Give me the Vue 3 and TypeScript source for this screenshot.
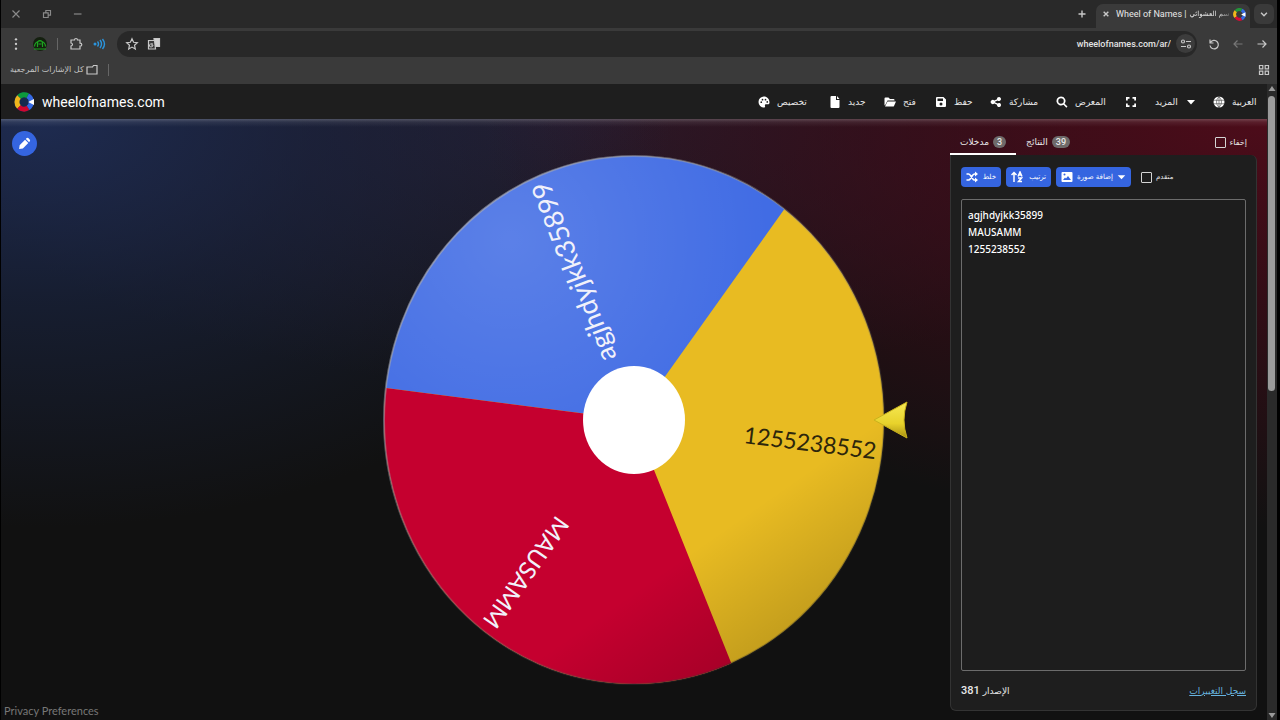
<script setup lang="ts">
import { ref } from 'vue'

interface NavItem {
  icon: string
  label: string
  title: string
  iconLast?: boolean
}

const navItems: NavItem[] = [
  { icon: 'palette', label: 'تخصيص', title: 'تخصيص' },
  { icon: 'file', label: 'جديد', title: 'جديد' },
  { icon: 'folder', label: 'فتح', title: 'فتح' },
  { icon: 'save', label: 'حفظ', title: 'حفظ' },
  { icon: 'share', label: 'مشاركة', title: 'مشاركة' },
  { icon: 'search', label: 'المعرض', title: 'المعرض' },
  { icon: 'full', label: '', title: 'ملء الشاشة' },
  { icon: 'caret', label: 'المزيد', title: 'المزيد', iconLast: true },
  { icon: 'globe', label: 'العربية', title: 'العربية' },
]

const icons: Record<string, string> = {
  palette:
    'M12 1a11 11 0 0 0 0 22c2 0 2.600-1.300 2-2.700-.8-2 .3-3.600 2.300-3.600H20c2 0 3-1.500 3-3.700C23 6 18 1 12 1zM6.500 14a1.700 1.700 0 1 1 0-3.400 1.700 1.700 0 0 1 0 3.400zm2.500-5a1.700 1.700 0 1 1 0-3.400 1.700 1.700 0 0 1 0 3.400zm6 0a1.700 1.700 0 1 1 0-3.400 1.700 1.700 0 0 1 0 3.400zm3.500 4.500a1.700 1.700 0 1 1 0-3.400 1.700 1.700 0 0 1 0 3.400z',
  file: 'M5 0h9v8h7v14q0 2-2 2H5q-2 0-2-2V2q0-2 2-2zm11 0 5 6h-5z',
  folder: 'M1 5q0-2 2-2h6l3 3h7q2 0 2 2v1H7l-4 8-2 2zm6 6h17l-4 9q-.5 1-2 1H2z',
  save: 'M4 2h13l5 5v13q0 2-2 2H4q-2 0-2-2V4q0-2 2-2zm1 3v5h11V5zm7 8a3 3 0 1 0 0 6 3 3 0 0 0 0-6z',
  share:
    'M18 2a4 4 0 1 1-2.800 6.900L9.900 11.400v1.200l5.300 2.500A4 4 0 1 1 14 17.500l-5.300-2.400a4.300 4.300 0 1 1 0-6.200L14 6.500A4 4 0 0 1 18 2z',
  search:
    'M10 1a9 9 0 0 1 7.200 14.400L23 21l-2.300 2.300-5.700-5.800A9 9 0 1 1 10 1zm0 3.500a5.500 5.500 0 1 0 0 11 5.500 5.500 0 0 0 0-11z',
  full: 'M2 2h7v3.500H5.500V9H2zm13 0h7v7h-3.500V5.500H15zM2 15h3.500v3.500H9V22H2zm16.500 0H22v7h-7v-3.500h3.500z',
  caret: 'M4 8h16l-8 9z',
}

const entries = ref('agjhdyjkk35899\nMAUSAMM\n1255238552')
const hidden = ref(false)
const advanced = ref(false)
</script>

<template>
  <div class="window">
    <header class="tabbar">
      <div class="controls">
        <button aria-label="Close window"><svg viewBox="0 0 12 12"><path d="M3 3l6 6M9 3l-6 6" /></svg></button>
        <button aria-label="Restore"><svg viewBox="0 0 12 12"><path d="M3 5h4v4h-4zM5 4.500V3h4v4H7.500" /></svg></button>
        <button aria-label="Minimise"><svg viewBox="0 0 12 12"><path d="M2.500 6h6.500" /></svg></button>
      </div>
      <div class="tabs-right">
        <button class="plus" aria-label="New tab"><svg viewBox="0 0 12 12"><path d="M6 3v6M3 6h6" /></svg></button>
        <div class="tab">
          <button aria-label="Close tab"><svg viewBox="0 0 12 12"><path d="M4 4l4 4M8 4l-4 4" /></svg></button>
          <span class="tab-title"><span>Wheel of Names |</span> <span class="ar" dir="rtl">سم العشوائي</span></span>
          <svg class="favicon" viewBox="0 0 24 24">
            <g fill="none" stroke-width="5.500">
              <path d="M5 6a9 9 0 0 1 11-2" stroke="#23953a" />
              <path d="M5 17a9 9 0 0 1 0-11" stroke="#f0b71b" />
              <path d="M16 20a9 9 0 0 1-11-3" stroke="#d50c35" />
              <path d="M16 4a9 9 0 0 1 0 16" stroke="#3569e4" />
            </g>
            <path d="M15 12l8-4v8z" fill="#fff" />
          </svg>
        </div>
        <button class="tab-menu" aria-label="Search tabs"><svg viewBox="0 0 12 12"><path d="M3.500 5L6 7.500 8.500 5" /></svg></button>
      </div>
    </header>

    <div class="toolbar">
      <button class="c18" aria-label="Menu">
        <svg viewBox="0 0 12 12"><g fill="#ccc" stroke="none"><circle cx="6" cy="2" r="1" /><circle cx="6" cy="6" r="1" /><circle cx="6" cy="10" r="1" /></g></svg>
      </button>
      <button class="avatar" aria-label="Profile">
        <svg viewBox="0 0 14 14"><circle cx="7" cy="7" r="7" fill="#14200f" stroke="none" /><path d="M1.500 9.500a5.500 5.500 0 1 1 11 0M4.500 10V7q0-3.500 2.500-3.500T9.500 7v3M5.500 7h3M1 12h12" stroke="#1da321" /></svg>
      </button>
      <i class="divider"></i>
      <button class="c18" aria-label="Extensions">
        <svg viewBox="0 0 14 14"><path d="M2 3h3.500q0-1.500 1.500-1.500T8.500 3H11v3.200q1.800 0 1.800 1.500T11 9.200V12H2V9q1.500-.3 1.500-1.500T2 6z" /></svg>
      </button>
      <button class="sound" aria-label="Audio">
        <svg viewBox="0 0 14 14"><circle cx="3" cy="7" r="1.500" fill="#2b94dc" stroke="none" /><path d="M5.500 4.500q2 2.500 0 5M8 3q3 4 0 8M10.500 2q4 5 0 10" stroke="#2b94dc" stroke-width="1.400" /></svg>
      </button>
      <div class="address">
        <button aria-label="Bookmark"><svg viewBox="0 0 14 14"><path d="M7 1.800l1.600 3.500 3.700.4-2.800 2.500.8 3.800L7 10.100 3.700 12l.8-3.800-2.800-2.500 3.700-.4z" /></svg></button>
        <button aria-label="Translate">
          <svg viewBox="0 0 14 14"><path d="M7 1.500h5.500v8H8z" fill="#d0d0d0" /><path d="M1.500 3.500h6l1 8.500H1.500z" fill="#3a3a3a" /><path d="M6 8H4M6 8q0 2-2 2t-1.500-2T6 7" stroke-width="1" /></svg>
        </button>
        <input class="url" type="text" aria-label="Address" value="wheelofnames.com/ar/" />
        <button class="tune" aria-label="Site settings">
          <svg viewBox="0 0 14 14"><path d="M7 4.500h5M2 9.500h5" /><circle cx="4" cy="4.500" r="1.500" /><circle cx="10" cy="9.500" r="1.500" /></svg>
        </button>
      </div>
      <div class="moves">
        <button aria-label="Reload"><svg viewBox="0 0 14 14"><path d="M3 2.500v3.500h3.500M3.500 5.500A4.200 4.200 0 1 1 3 8.500" /></svg></button>
        <button class="dim" aria-label="Forward"><svg viewBox="0 0 14 14"><path d="M11.500 7H3M6.500 3.500L3 7l3.500 3.500" /></svg></button>
        <button aria-label="Back"><svg viewBox="0 0 14 14"><path d="M2.500 7H11M7.500 3.500L11 7l-3.500 3.500" /></svg></button>
      </div>
    </div>

    <div class="bookmarks">
      <button class="all">
        <span class="ar" dir="rtl">كل الإشارات المرجعية</span>
        <svg viewBox="0 0 14 14"><path d="M2 4h5.500l1-1.500h3.500v8.500h-10z" /></svg>
      </button>
      <i class="divider"></i>
      <button class="apps" aria-label="Apps"><svg viewBox="0 0 14 14"><path d="M2.500 2.500h3.300v3.300H2.500zM8.200 2.500h3.300v3.300H8.200zM2.500 8.200h3.300v3.300H2.500zM8.200 8.200h3.300v3.300H8.200z" /></svg></button>
    </div>

    <div class="viewport">
      <div class="site">
        <header class="site-head">
          <a class="brand" href="#">
            <svg viewBox="0 0 24 24">
              <circle cx="12" cy="12" r="12" fill="#16294e" />
              <g fill="none" stroke-width="6">
                <path d="M6 6a8.500 8.500 0 0 1 10.500-1.500" stroke="#0c9a3b" />
                <path d="M6 18a8.500 8.500 0 0 1 0-12" stroke="#efb51c" />
                <path d="M17 19a8.500 8.500 0 0 1-11-1" stroke="#d0062f" />
                <path d="M16.500 4.500a8.500 8.500 0 0 1 .5 14.500" stroke="#3569e4" />
              </g>
              <path d="M17 12l7-3.500v7z" fill="#fff" />
            </svg>
            <span>wheelofnames.com</span>
          </a>
          <nav>
            <button v-for="n in navItems" :key="n.icon" :class="{ last: n.iconLast }" :aria-label="n.title">
              <svg v-if="n.icon === 'globe'" viewBox="0 0 24 24">
                <circle cx="12" cy="12" r="11" fill="#fff" />
                <path d="M1 8.500h22M1 15.500h22M12 1v22M12 1q-10 11 0 22M12 1q10 11 0 22" fill="none" stroke="#1e1e1e" stroke-width="1" />
              </svg>
              <svg v-else viewBox="0 0 24 24"><path :d="icons[n.icon]" fill="#fff" fill-rule="evenodd" /></svg>
              <span v-if="n.label" class="ar" dir="rtl">{{ n.label }}</span>
            </button>
          </nav>
        </header>

        <main>
          <button class="edit" aria-label="Edit title">
            <svg viewBox="0 0 24 24"><path d="M2 22l1-7L13 5l6 6L9 21zM14.500 3.500l1-1q2-2 4 0l2 2q2 2 0 4l-1 1z" fill="#fff" /></svg>
          </button>
          <div class="stage">
            <svg class="wheel" viewBox="0 0 530 540" role="img" aria-label="Wheel">
              <defs>
                <clipPath id="disc"><ellipse cx="254" cy="270" rx="250" ry="264" /></clipPath>
                <radialGradient id="gloss" gradientUnits="userSpaceOnUse" cx="130" cy="90" r="260">
                  <stop offset="0" stop-color="#fff" stop-opacity=".14" />
                  <stop offset="1" stop-color="#fff" stop-opacity="0" />
                </radialGradient>
                <linearGradient id="shade" gradientUnits="userSpaceOnUse" x1="350" y1="375" x2="430" y2="490">
                  <stop offset="0" stop-opacity="0" />
                  <stop offset="1" stop-opacity=".18" />
                </linearGradient>
                <linearGradient id="rim" x1="0" y1="0" x2="1" y2="1">
                  <stop offset="0" stop-color="#a9b1cf" stop-opacity=".75" />
                  <stop offset=".5" stop-color="#8d8d8d" stop-opacity=".3" />
                  <stop offset="1" stop-color="#000" stop-opacity=".3" />
                </linearGradient>
                <linearGradient id="gold" x1="0" y1="0" x2="0" y2="1">
                  <stop offset="0" stop-color="#f6ea55" />
                  <stop offset=".6" stop-color="#e8d22b" />
                  <stop offset="1" stop-color="#a88f12" />
                </linearGradient>
              </defs>
              <g clip-path="url(#disc)">
                <rect width="530" height="540" fill="#e8bb22" />
                <path d="M254 270L6 238L-40 -40H475z" fill="#416ce4" />
                <path d="M254 270L-40 232V560H370z" fill="#c5002f" />
                <path d="M254 270L6 238L-40 -40H475z" fill="url(#gloss)" />
                <rect width="530" height="540" fill="url(#shade)" />
              </g>
              <ellipse cx="254" cy="270" rx="250" ry="264" fill="none" stroke="url(#rim)" stroke-width="2" />
              <g class="names" dominant-baseline="central">
                <text class="long" transform="translate(227 211) rotate(-111)">agjhdyjkk35899</text>
                <text class="mid" transform="translate(184 370) rotate(125)">MAUSAMM</text>
                <text class="dark" transform="translate(364 284) rotate(7)">1255238552</text>
              </g>
              <ellipse cx="254" cy="270" rx="51" ry="54" fill="#fff" />
              <path d="M494 270L527 252Q521 270 527 288z" fill="url(#gold)" stroke="#c9b21c" stroke-linejoin="round" />
            </svg>
          </div>

          <section class="panel">
            <div class="tabs">
              <button class="active"><span class="ar" dir="rtl">مدخلات</span><b>3</b></button>
              <button><span class="ar" dir="rtl">النتائج</span><b>39</b></button>
              <label class="hide"><input v-model="hidden" type="checkbox" /><span class="ar" dir="rtl">إخفاء</span></label>
            </div>
            <div class="card">
              <div class="tools">
                <button class="shuffle">
                  <svg viewBox="0 0 24 24"><path d="M1 6h4q2 0 4 3l4 6q2 3 4 3h2M1 18h4q2 0 4-3l4-6q2-3 4-3h2" fill="none" stroke="#fff" stroke-width="3" /><path d="M18 1l6 5-6 5zM18 13l6 5-6 5z" fill="#fff" /></svg>
                  <span class="ar" dir="rtl">خلط</span>
                </button>
                <button class="sort">
                  <svg viewBox="0 0 24 24"><path d="M6 22V4M1 8l5-5 5 5M14 14h7l-6 7h7M14 11l4-9 4 9M15 8h6" fill="none" stroke="#fff" stroke-width="3" /></svg>
                  <span class="ar" dir="rtl">ترتيب</span>
                </button>
                <button class="image">
                  <svg viewBox="0 0 24 24"><path d="M3 2h18q2 0 2 2v16q0 2-2 2H3q-2 0-2-2V4q0-2 2-2zm1 16h16l-6-8-4 5-2-2zM7 5a2 2 0 1 0 0 4 2 2 0 0 0 0-4z" fill="#fff" fill-rule="evenodd" /></svg>
                  <span class="ar" dir="rtl">إضافة صورة</span>
                  <svg class="small" viewBox="0 0 24 24"><path d="M2 7h20L12 18z" fill="#fff" /></svg>
                </button>
                <label class="adv"><input v-model="advanced" type="checkbox" /><span class="ar" dir="rtl">متقدم</span></label>
              </div>
              <textarea v-model="entries" aria-label="مدخلات" spellcheck="false"></textarea>
              <footer>
                <span class="version"><span>381</span> <span class="ar" dir="rtl">الإصدار</span></span>
                <a class="ar" dir="rtl" href="#">سجل التغييرات</a>
              </footer>
            </div>
          </section>
          <a class="privacy" href="#">Privacy Preferences</a>
        </main>
      </div>
      <div class="scroll">
        <svg viewBox="0 0 10 10"><path d="M5 2l3.500 5h-7z" /></svg>
        <div class="track"><i></i></div>
        <svg viewBox="0 0 10 10"><path d="M5 8l3.500-5h-7z" /></svg>
      </div>
    </div>
  </div>
</template>

<style>
body {
  background: #000;
}
</style>

<style scoped>
* {
  box-sizing: border-box;
}
.window {
  display: flex;
  flex-direction: column;
  height: 100vh;
  padding: 0 3px 0 1px;
  background: #000;
  color: #e8e8e8;
  font-family: Roboto, "DejaVu Sans", sans-serif;
  font-size: 10px;
}
button {
  display: flex;
  align-items: center;
  justify-content: center;
  padding: 0;
  border: 0;
  background: none;
  color: inherit;
  font: inherit;
}
svg {
  display: block;
  flex: none;
}
a {
  color: inherit;
  text-decoration: none;
}
.ar {
  font-family: "DejaVu Sans", sans-serif;
  white-space: nowrap;
}
.tabbar svg,
.toolbar svg,
.bookmarks svg {
  width: 14px;
  height: 14px;
  fill: none;
  stroke: #c8c8c8;
  stroke-width: 1.2;
}
.tabbar {
  display: flex;
  justify-content: space-between;
  height: 28px;
  background: #292929;
}
.controls {
  display: flex;
  gap: 16px;
  padding-left: 7px;
}
.controls button {
  width: 15px;
}
.controls svg {
  stroke: #8a8a8a;
  stroke-width: 1;
}
.tabs-right {
  display: flex;
  gap: 4px;
  padding: 4px 3px 0 0;
}
.plus {
  width: 16px;
  height: 20px;
  margin-right: 2px;
}
.tab {
  display: flex;
  align-items: center;
  gap: 3px;
  height: 24px;
  width: 154px;
  padding: 0 4px 4px 3px;
  border-radius: 7px 7px 0 0;
  background: #3a3a3a;
}
.tab-title {
  display: flex;
  flex: 1;
  gap: 3px;
  font-size: 9px;
  line-height: 14px;
  white-space: nowrap;
}
.tab-title .ar {
  font-size: 7px;
  mask-image: linear-gradient(to right, #000 70%, #0005);
}
.tabbar .favicon {
  width: 13px;
  height: 13px;
  stroke: none;
}
.tab-menu {
  width: 20px;
  height: 20px;
  border-radius: 6px;
  background: #3a3a3a;
}
.toolbar {
  display: flex;
  align-items: center;
  height: 31px;
  padding: 0 8px 0 6px;
  background: #3a3a3a;
}
.c18 {
  width: 18px;
}
.avatar {
  margin-left: 6px;
  width: 18px;
}
.divider {
  width: 1px;
  height: 12px;
  background: #666;
}
.toolbar .divider {
  margin: 0 9px 0 8px;
}
.sound {
  width: 18px;
  margin-left: 5px;
}
.address {
  display: flex;
  align-items: center;
  flex: 1;
  gap: 8px;
  height: 26px;
  margin: 0 10px 0 9px;
  padding: 0 2px 0 8px;
  border-radius: 13px;
  background: #282828;
}
.url {
  flex: 1;
  min-width: 0;
  padding: 0;
  border: 0;
  outline: 0;
  background: none;
  color: #e4e4e4;
  font: 500 9px/14px Roboto, sans-serif;
  text-align: right;
}
.tune {
  width: 19px;
  height: 19px;
  margin-left: -3px;
  border-radius: 50%;
  background: #3c3c3c;
}
.moves {
  display: flex;
  gap: 10px;
}
.moves .dim svg {
  stroke: #777;
}
.bookmarks {
  display: flex;
  align-items: center;
  height: 25px;
  padding: 0 6px 4px 9px;
  background: #3a3a3a;
}
.all {
  gap: 1px;
  margin-right: 9px;
  color: #c4c4c4;
  font-size: 8px;
}
.apps {
  margin-left: auto;
}
.viewport {
  display: flex;
  flex: 1;
  min-height: 0;
}
.site {
  display: flex;
  flex-direction: column;
  flex: 1;
  min-width: 0;
}
.site-head {
  display: flex;
  align-items: center;
  justify-content: space-between;
  height: 35px;
  padding: 0 0 0 11px;
  background: #1e1e1e;
}
.brand {
  display: flex;
  align-items: center;
  gap: 6px;
  color: #fff;
  font-size: 14px;
}
.brand svg {
  width: 24px;
  height: 20px;
}
nav {
  display: grid;
  grid-template-columns: 71px 55px 51px 55px 66px 69px 30px 58px 54px;
}
nav button {
  justify-content: flex-start;
  gap: 7px;
  font-size: 9px;
}
nav .last {
  flex-direction: row-reverse;
  justify-content: flex-end;
}
nav svg {
  width: 12px;
  height: 12px;
}
main {
  position: relative;
  display: flex;
  flex: 1;
  min-height: 0;
  padding: 8px 10px 9px 0;
  background:
    linear-gradient(#ffffff38, #ffffff14 3px, #ffffff00 8px),
    radial-gradient(ellipse 50% 68% at 3% 0, #1e2b50, #1b284b88 45%, #1c2a5200),
    radial-gradient(ellipse 62% 68% at 100% 0, #4d0c1a, #480a1999 45%, #4b0a1a00),
    radial-gradient(ellipse 50% 45% at 45% 0, #241c2c, #241c2c00),
    #111;
}
.edit {
  position: absolute;
  top: 12px;
  left: 11px;
  width: 25px;
  height: 25px;
  border-radius: 50%;
  background: #3565e0;
}
.edit svg {
  width: 13px;
  height: 13px;
}
.stage {
  display: flex;
  flex: 1;
  align-items: center;
  justify-content: flex-end;
  min-width: 0;
  padding: 2px 40px 0 0;
}
.wheel {
  width: 530px;
  height: 540px;
}
.names {
  fill: #f1f1fa;
  font-family: Lato, sans-serif;
  font-size: 23px;
}
.names .long {
  font-size: 27px;
}
.names .mid {
  font-size: 24px;
}
.names .dark {
  fill: #2d260c;
}
.panel {
  display: flex;
  flex-direction: column;
  width: 307px;
}
.tabs {
  display: flex;
  height: 28px;
  padding-right: 10px;
  font-size: 9px;
}
.tabs button {
  gap: 4px;
  padding: 3px 10px 0;
  border-bottom: 2px solid transparent;
}
.tabs .active {
  border-color: #fff;
}
.tabs b {
  padding: 0 4px;
  border-radius: 7px;
  background: #6e6a6a;
  font-size: 9px;
  font-weight: 500;
  line-height: 12px;
}
label {
  display: flex;
  align-items: center;
  gap: 4px;
}
.hide {
  margin-left: auto;
  padding-top: 3px;
  font-size: 8px;
}
input[type="checkbox"] {
  appearance: none;
  width: 11px;
  height: 11px;
  margin: 0;
  border: 1px solid #d4d4d4;
  border-radius: 1px;
}
.card {
  display: flex;
  flex: 1;
  flex-direction: column;
  min-height: 0;
  padding: 12px 10px 0;
  border: 1px solid #333;
  border-top: 0;
  border-radius: 0 6px 6px 6px;
  background: #1e1e1e;
}
.tools {
  display: flex;
  gap: 5px;
  height: 20px;
  margin-bottom: 12px;
  font-size: 7px;
}
.tools button {
  justify-content: space-between;
  padding: 0 5px;
  border-radius: 4px;
  background: #3565e0;
  color: #fff;
}
.tools svg {
  width: 12px;
  height: 12px;
}
.tools .small {
  width: 9px;
}
.shuffle {
  width: 40px;
}
.sort {
  width: 45px;
}
.image {
  width: 75px;
}
.adv {
  margin-left: 5px;
}
textarea {
  display: block;
  flex: 1;
  min-height: 0;
  width: 100%;
  padding: 7px 6px;
  border: 1px solid #6c6c6c;
  border-radius: 2px;
  outline: 0;
  resize: none;
  background: #1d1d1d;
  color: #fff;
  font: 500 10px/17px "Noto Sans", sans-serif;
}
footer {
  display: flex;
  align-items: center;
  justify-content: space-between;
  height: 39px;
  font-size: 9px;
}
.version {
  display: flex;
  align-items: center;
  gap: 3px;
}
.version > span:first-child {
  font-size: 11px;
  font-weight: 500;
}
footer a {
  color: #67b3df;
  text-decoration: underline;
}
.privacy {
  position: absolute;
  bottom: 2px;
  left: 3px;
  color: #777;
  font: 11px/15px Lato, sans-serif;
}
.scroll {
  display: flex;
  flex-direction: column;
  width: 10px;
  background: #2a2a2a;
}
.scroll svg {
  width: 10px;
  height: 10px;
  fill: #9a9a9a;
}
.track {
  flex: 1;
  padding: 2px 2px 0 1px;
}
.track i {
  display: block;
  height: 48%;
  border-radius: 4px;
  background: #9b9b9b;
}
</style>
